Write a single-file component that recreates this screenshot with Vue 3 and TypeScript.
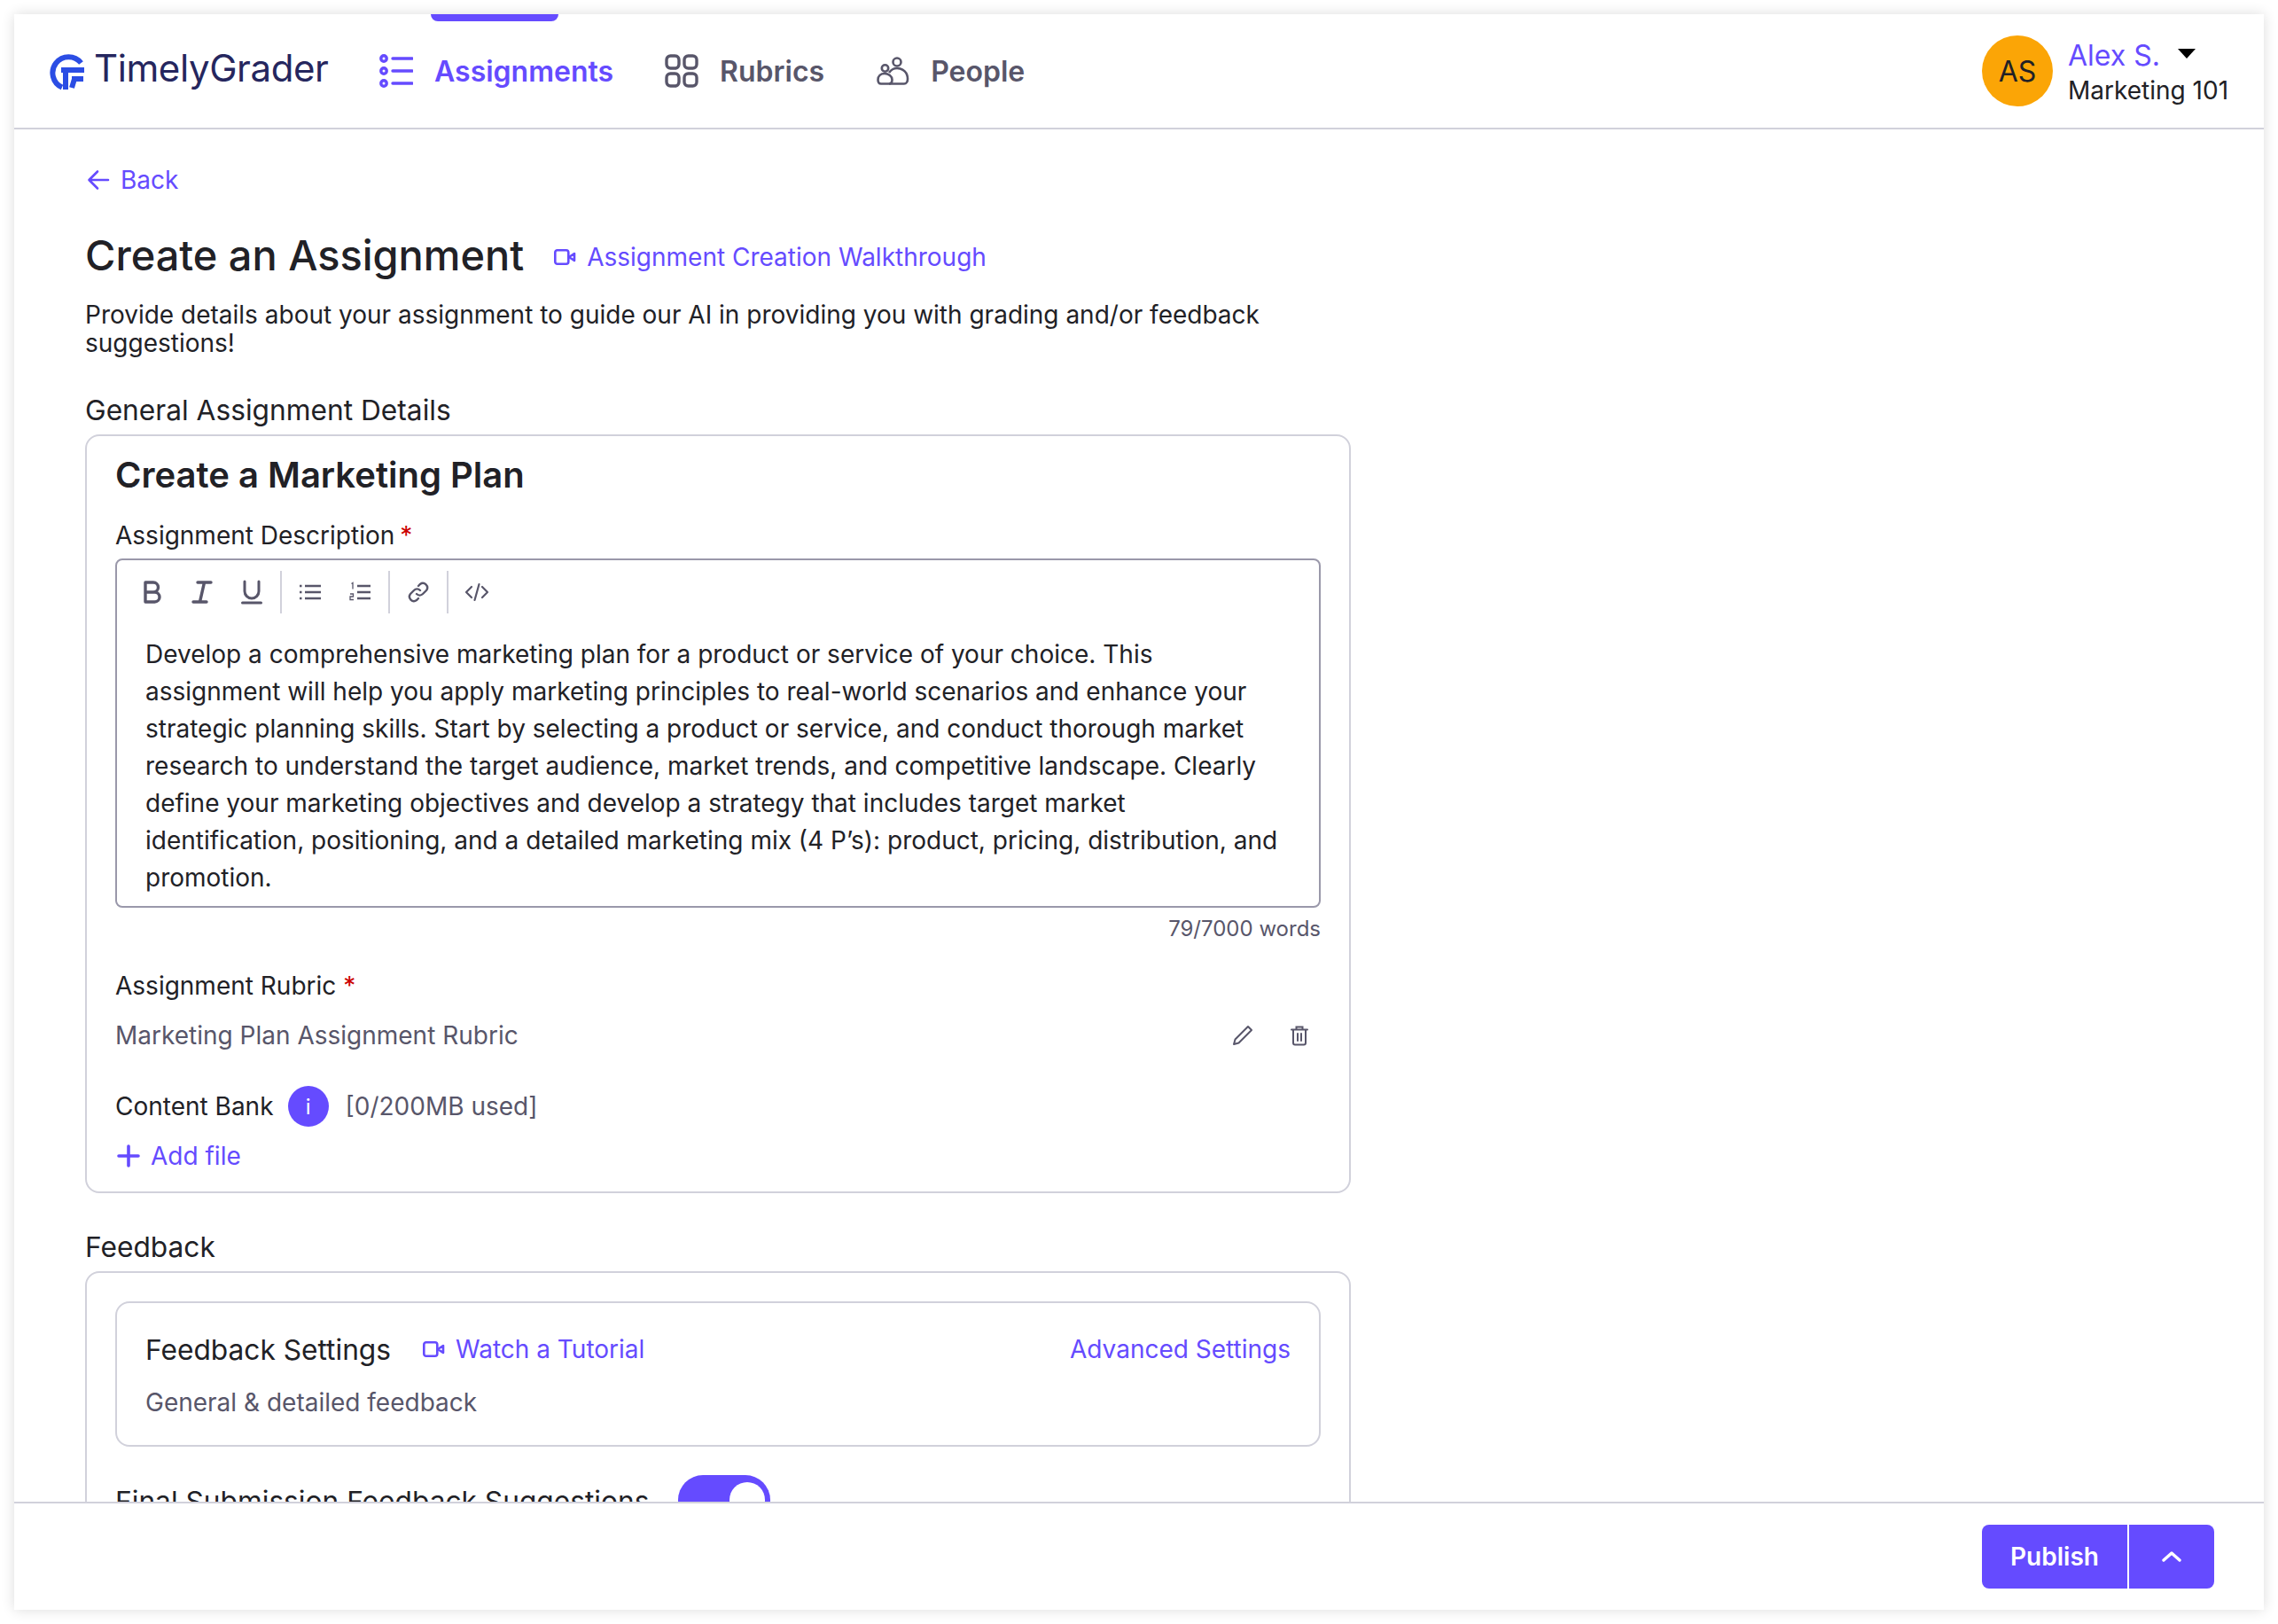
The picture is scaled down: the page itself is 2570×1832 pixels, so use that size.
<script setup lang="ts">
const navItems = [
  { label: 'Assignments', icon: 'list', active: true },
  { label: 'Rubrics', icon: 'grid', active: false },
  { label: 'People', icon: 'people', active: false },
];

const descLines = [
  'Develop a comprehensive marketing plan for a product or service of your choice. This',
  'assignment will help you apply marketing principles to real-world scenarios and enhance your',
  'strategic planning skills. Start by selecting a product or service, and conduct thorough market',
  'research to understand the target audience, market trends, and competitive landscape. Clearly',
  'define your marketing objectives and develop a strategy that includes target market',
  'identification, positioning, and a detailed marketing mix (4 P’s): product, pricing, distribution, and',
  'promotion.',
];
</script>

<template>
  <div class="frame">
    <header class="topbar">
      <div class="logo">
        <svg class="logo-mark" width="42" height="42" viewBox="0 0 42 42" fill="none">
          <path d="M36.5 11A18 18 0 1 0 15 38.6" stroke="#2b4de4" stroke-width="6" />
          <path d="M14 19h26M19 19v22" stroke="#2b4de4" stroke-width="6" />
          <path d="M26 29h13M29 29l-3 10" stroke="#2b4de4" stroke-width="6" />
        </svg>
        <span class="logo-text">TimelyGrader</span>
      </div>
      <nav class="nav">
        <a v-for="item in navItems" :key="item.label" class="nav-item" :class="{ active: item.active }">
          <svg v-if="item.icon === 'list'" class="nav-icon" viewBox="0 0 38 38" fill="none" stroke="currentColor" stroke-width="3.4">
            <circle cx="5" cy="5" r="3.2" />
            <circle cx="5" cy="19" r="3.2" />
            <circle cx="5" cy="33" r="3.2" />
            <path d="M15 5h22M15 19h22M15 33h22" stroke-linecap="round" />
          </svg>
          <svg v-else-if="item.icon === 'grid'" class="nav-icon" viewBox="0 0 38 38" fill="none" stroke="currentColor" stroke-width="3.4">
            <rect x="2" y="2" width="14" height="14" rx="4.5" />
            <rect x="22" y="2" width="14" height="14" rx="4.5" />
            <rect x="2" y="22" width="14" height="14" rx="4.5" />
            <rect x="22" y="22" width="14" height="14" rx="4.5" />
          </svg>
          <svg v-else class="nav-icon" viewBox="0 -4 38 38" fill="none" stroke="currentColor" stroke-width="2.6">
            <circle cx="24" cy="5" r="4.500" />
            <circle cx="10.500" cy="12" r="3.700" />
            <path d="M2.500 25c0-4 3-7 7.500-7s8.500 3 8.500 7c0 3-1.500 4.500-4 4.500H6c-2.500 0-3.500-2-3.500-4.500Z" />
            <path d="M15 17c2-3 5-5 9-5 7 0 12 5 12 12 0 3-1.500 5.500-4 5.500H15" />
          </svg>
          <span>{{ item.label }}</span>
        </a>
      </nav>
      <div class="user">
        <div class="avatar">AS</div>
        <div class="user-meta">
          <div class="user-name">Alex S.<span class="caret"></span></div>
          <div class="user-course">Marketing 101</div>
        </div>
      </div>
    </header>

    <main class="content">
      <a class="back">
        <svg width="26" height="26" viewBox="0 0 26 26" fill="none" stroke="currentColor" stroke-width="2.6" stroke-linecap="round" stroke-linejoin="round">
          <path d="M24 13H3M12 3.500 2.500 13l9.500 9.500" />
        </svg>
        Back
      </a>

      <div class="title-row">
        <h1>Create an Assignment</h1>
        <a class="link video-link walkthrough">
          <svg class="video-icon" width="25" height="18" viewBox="0 0 25 18" fill="none" stroke="currentColor" stroke-width="2.6">
            <rect x="1.300" y="1.300" width="15" height="15.400" rx="2.500" />
            <path d="m17 9 6-4v8Z" stroke-linejoin="round" />
          </svg>
          Assignment Creation Walkthrough
        </a>
      </div>

      <p class="intro">Provide details about your assignment to guide our AI in providing you with grading and/or feedback suggestions!</p>

      <h2 class="section-label general">General Assignment Details</h2>
      <section class="card card-general">
        <h3 class="plan-title">Create a Marketing Plan</h3>
        <div class="field-label desc-label">Assignment Description<span class="req desc-req">*</span></div>

        <div class="editor">
          <div class="toolbar">
            <button class="tool">
              <svg width="22" height="28" viewBox="0 0 22 28" fill="none" stroke="#58566a" stroke-width="3.400" stroke-linejoin="round"><path d="M3 3h9a5.500 5.500 0 0 1 0 11H3Zm0 11h10.500a5.500 5.500 0 0 1 0 11H3Z" /></svg>
            </button>
            <button class="tool">
              <svg width="24" height="28" viewBox="0 0 24 28" fill="none" stroke="#58566a" stroke-width="3.400" stroke-linecap="round"><path d="M7 3h15M2 25h15M14.500 3l-5 22" /></svg>
            </button>
            <button class="tool">
              <svg width="24" height="28" viewBox="0 0 24 28" fill="none" stroke="#58566a" stroke-width="3" stroke-linecap="round"><path d="M4 2v11a8 8 0 0 0 16 0V2M1.500 26h21" /></svg>
            </button>
            <span class="tool-sep"></span>
            <button class="tool">
              <svg width="24" height="20" viewBox="0 0 24 20" fill="none" stroke="#58566a" stroke-width="2.400"><path d="M6 3h18M6 10h18M6 17h18" /><path d="M0 3h2.500M0 10h2.500M0 17h2.500" /></svg>
            </button>
            <button class="tool">
              <svg width="24" height="24" viewBox="0 0 24 24" fill="none" stroke="#58566a" stroke-width="2.400"><path d="M9 5h15M9 12h15M9 19h15" /><path d="M2.500 2.500 4 1.500v7M1 14h3.500v3H1v3.500h4" stroke-width="1.300" /></svg>
            </button>
            <span class="tool-sep"></span>
            <button class="tool">
              <svg width="24" height="24" viewBox="0 0 24 24" fill="none" stroke="#58566a" stroke-width="2.400" stroke-linecap="round"><path d="M10 14a5 5 0 0 0 7 0l4-4a5 5 0 0 0-7-7l-2 2" /><path d="M14 10a5 5 0 0 0-7 0l-4 4a5 5 0 0 0 7 7l2-2" /></svg>
            </button>
            <span class="tool-sep"></span>
            <button class="tool">
              <svg width="28" height="22" viewBox="0 0 28 22" fill="none" stroke="#58566a" stroke-width="2.200" stroke-linecap="round" stroke-linejoin="round"><path d="M8 5 2 11l6 6M20 5l6 6-6 6M16.500 2l-5 18" /></svg>
            </button>
          </div>
          <div class="editor-text">
            <div v-for="line in descLines" :key="line">{{ line }}</div>
          </div>
        </div>
        <div class="word-count">79/7000 words</div>

        <div class="field-label rubric-label">Assignment Rubric <span class="req">*</span></div>
        <div class="rubric-row">
          <span>Marketing Plan Assignment Rubric</span>
          <div class="rubric-actions">
            <svg width="24" height="24" viewBox="0 0 24 24" fill="none" stroke="#58566a" stroke-width="2" stroke-linejoin="round"><path d="m2 22 1.500-5.500L18 2l4 4L7.500 20.500Z" /></svg>
            <svg width="20" height="24" viewBox="0 0 20 24" fill="none" stroke="#58566a" stroke-width="2" stroke-linecap="round"><path d="M1 5.500h18M6.500 5V2.500h7V5M3 6v14.500a2 2 0 0 0 2 2h10a2 2 0 0 0 2-2V6M8 10v8M12 10v8" /></svg>
          </div>
        </div>
        <div class="bank-row">
          <span class="bank-label">Content Bank</span>
          <span class="info">i</span>
          <span class="bank-usage">[0/200MB used]</span>
        </div>
        <a class="link add-file">
          <svg width="26" height="26" viewBox="0 0 26 26" fill="none" stroke="currentColor" stroke-width="3.600" stroke-linecap="round"><path d="M13 2v22M2 13h22" /></svg>
          Add file
        </a>
      </section>

      <h2 class="section-label feedback">Feedback</h2>
      <section class="card card-feedback">
        <div class="settings">
          <div class="settings-head">
            <span class="settings-title">Feedback Settings</span>
            <a class="link video-link tutorial">
              <svg class="video-icon" width="25" height="18" viewBox="0 0 25 18" fill="none" stroke="currentColor" stroke-width="2.6">
                <rect x="1.300" y="1.300" width="15" height="15.400" rx="2.500" />
                <path d="m17 9 6-4v8Z" stroke-linejoin="round" />
              </svg>
              Watch a Tutorial
            </a>
            <a class="link advanced">Advanced Settings</a>
          </div>
          <div class="settings-sub">General &amp; detailed feedback</div>
        </div>
        <div class="final-row">
          <span>Final Submission Feedback Suggestions</span>
          <span class="toggle"><span class="knob"></span></span>
        </div>
      </section>
    </main>

    <footer class="footer">
      <div class="publish">
        <button class="publish-main">Publish</button>
        <button class="publish-more">
          <svg width="22" height="14" viewBox="0 0 22 14" fill="none" stroke="#fff" stroke-width="3.400" stroke-linecap="round" stroke-linejoin="round"><path d="m2 11 9-8 9 8" /></svg>
        </button>
      </div>
    </footer>
  </div>
</template>

<style>
html,
body {
  margin: 0;
  background: #fff;
}
</style>

<style scoped>
.frame {
  box-sizing: border-box;
  width: 2538px;
  height: 1800px;
  margin: 16px;
  display: flex;
  flex-direction: column;
  overflow: hidden;
  background: #fff;
  box-shadow: 0 0 14px rgba(0, 0, 0, 0.14);
  font-family: Inter, sans-serif;
  color: #212126;
}

.topbar {
  flex: none;
  box-sizing: border-box;
  height: 130px;
  display: flex;
  align-items: center;
  padding: 0 40px;
  border-bottom: 2px solid #d1d1db;
}

.logo {
  display: flex;
  align-items: center;
  gap: 9px;
  width: 372px;
  height: 100%;
  box-sizing: border-box;
}

.logo-mark {
  margin-top: 2px;
  margin-left: -1px;
}

.logo-text {
  font-size: 42px;
  font-weight: 400;
  color: #25265e;
  letter-spacing: -0.4px;
  margin-top: -8px;
}

.nav {
  display: flex;
  gap: 58px;
  height: 100%;
}

.nav-item {
  position: relative;
  display: flex;
  align-items: center;
  gap: 24px;
  font-size: 32px;
  font-weight: 600;
  color: #58566a;
}

.nav-item.active {
  color: #654bff;
}

.nav-item.active::before {
  content: '';
  position: absolute;
  top: 0;
  left: 58px;
  width: 144px;
  height: 8px;
  border-radius: 0 0 8px 8px;
  background: #654bff;
}

.nav-icon {
  width: 38px;
  height: 38px;
}

.user {
  margin-left: auto;
  display: flex;
  align-items: center;
  gap: 17px;
}

.avatar {
  width: 80px;
  height: 80px;
  border-radius: 50%;
  background: #fba506;
  display: flex;
  align-items: center;
  justify-content: center;
  font-size: 32px;
}

.user-meta {
  width: 181px;
  margin-top: 3px;
}

.user-name {
  position: relative;
  font-size: 32px;
  line-height: 40px;
  color: #654bff;
}

.caret {
  position: absolute;
  left: 124px;
  top: 12px;
  width: 0;
  height: 0;
  border-left: 10px solid transparent;
  border-right: 10px solid transparent;
  border-top: 11px solid #000;
}

.user-course {
  font-size: 28px;
  line-height: 38px;
  white-space: nowrap;
}

.content {
  flex: 1;
  min-height: 0;
  overflow: hidden;
  padding: 38px 0 0 80px;
}

.back {
  display: flex;
  align-items: center;
  gap: 12px;
  height: 38px;
  font-size: 28px;
  color: #654bff;
}

.back svg {
  margin-left: 2px;
}

.title-row {
  display: flex;
  align-items: center;
  gap: 34px;
  margin-top: 36px;
  height: 60px;
}

h1 {
  margin: 0;
  font-size: 46.9px;
  font-weight: 540;
}

.link {
  color: #654bff;
  font-size: 28px;
}

.video-link {
  display: flex;
  align-items: center;
  gap: 12px;
}

.walkthrough {
  margin-top: 3px;
}

.intro {
  width: 1400px;
  margin: 21px 0 0;
  font-size: 28px;
  line-height: 32px;
}

.section-label {
  margin: 0;
  font-size: 31.7px;
  font-weight: 400;
  line-height: 40px;
}

.general {
  margin-top: 40px;
}

.card {
  box-sizing: border-box;
  width: 1428px;
  padding: 0 32px;
  border: 2px solid #d1d1db;
  border-radius: 16px;
}

.card-general {
  margin-top: 7px;
}

.plan-title {
  margin: 19px 0 0;
  font-size: 40px;
  font-weight: 600;
  line-height: 50px;
}

.field-label {
  font-size: 28px;
  line-height: 36px;
}

.req {
  color: #c00;
}

.desc-req {
  margin-left: 6px;
}

.desc-label {
  margin-top: 25px;
}

.editor {
  box-sizing: border-box;
  height: 394px;
  margin-top: 8px;
  border: 2px solid #9a98aa;
  border-radius: 8px;
}

.toolbar {
  display: flex;
  align-items: center;
  height: 48px;
  margin-top: 12px;
  padding-left: 12px;
}

.tool {
  width: 56px;
  height: 48px;
  padding: 0;
  border: 0;
  background: none;
  display: flex;
  align-items: center;
  justify-content: center;
}

.tool-sep {
  width: 2px;
  height: 48px;
  margin: 0 4px;
  background: #d1d1db;
}

.editor-text {
  margin-top: 25px;
  padding-left: 32px;
  font-size: 28px;
  line-height: 42px;
  white-space: nowrap;
}

.word-count {
  margin-top: 11px;
  text-align: right;
  font-size: 24px;
  line-height: 26px;
  color: #58566a;
}

.rubric-label {
  margin-top: 33px;
}

.rubric-row {
  display: flex;
  align-items: center;
  justify-content: space-between;
  margin-top: 20px;
  padding-right: 14px;
  height: 36px;
  font-size: 28px;
  color: #58566a;
}

.rubric-actions {
  display: flex;
  align-items: center;
  gap: 42px;
}

.bank-row {
  display: flex;
  align-items: center;
  margin-top: 39px;
  height: 46px;
  font-size: 28px;
}

.info {
  width: 46px;
  height: 46px;
  margin-left: 16px;
  border-radius: 50%;
  background: #654bff;
  color: #fff;
  font-size: 24px;
  display: flex;
  align-items: center;
  justify-content: center;
}

.bank-usage {
  margin-left: 19px;
  color: #58566a;
}

.add-file {
  display: flex;
  align-items: center;
  gap: 12px;
  margin: 13px 0 20px 2px;
  height: 40px;
}

.feedback {
  margin-top: 41px;
}

.card-feedback {
  padding-top: 32px;
  padding-bottom: 40px;
  margin-top: 7px;
}

.settings {
  box-sizing: border-box;
  height: 164px;
  padding: 32px 32px 0;
  border: 2px solid #d1d1db;
  border-radius: 16px;
}

.settings-head {
  display: flex;
  align-items: center;
  height: 40px;
}

.settings-title {
  font-size: 31.7px;
}

.tutorial {
  margin-left: 36px;
}

.advanced {
  margin-left: auto;
}

.settings-sub {
  margin-top: 22px;
  font-size: 28px;
  line-height: 36px;
  color: #58566a;
}

.final-row {
  display: flex;
  align-items: flex-start;
  gap: 33px;
  margin-top: 32px;
  font-size: 31.7px;
}

.final-row > span:first-child {
  margin-top: 10px;
}

.toggle {
  position: relative;
  width: 104px;
  height: 56px;
  border-radius: 28px;
  background: #654bff;
}

.knob {
  position: absolute;
  top: 8px;
  right: 6px;
  width: 40px;
  height: 40px;
  border-radius: 50%;
  background: #fff;
}

.footer {
  flex: none;
  box-sizing: border-box;
  height: 122px;
  display: flex;
  justify-content: flex-end;
  align-items: flex-start;
  padding: 24px 56px 0 0;
  border-top: 2px solid #d1d1db;
  background: #fff;
}

.publish {
  display: flex;
  height: 72px;
}

.publish button {
  border: 0;
  background: #654bff;
  color: #fff;
  font-family: inherit;
  padding: 0;
  display: flex;
  align-items: center;
  justify-content: center;
}

.publish-main {
  width: 166px;
  border-radius: 8px 0 0 8px;
  border-right: 2px solid #fff !important;
  font-size: 28px;
  font-weight: 600;
}

.publish-more {
  width: 96px;
  border-radius: 0 8px 8px 0;
}
</style>
